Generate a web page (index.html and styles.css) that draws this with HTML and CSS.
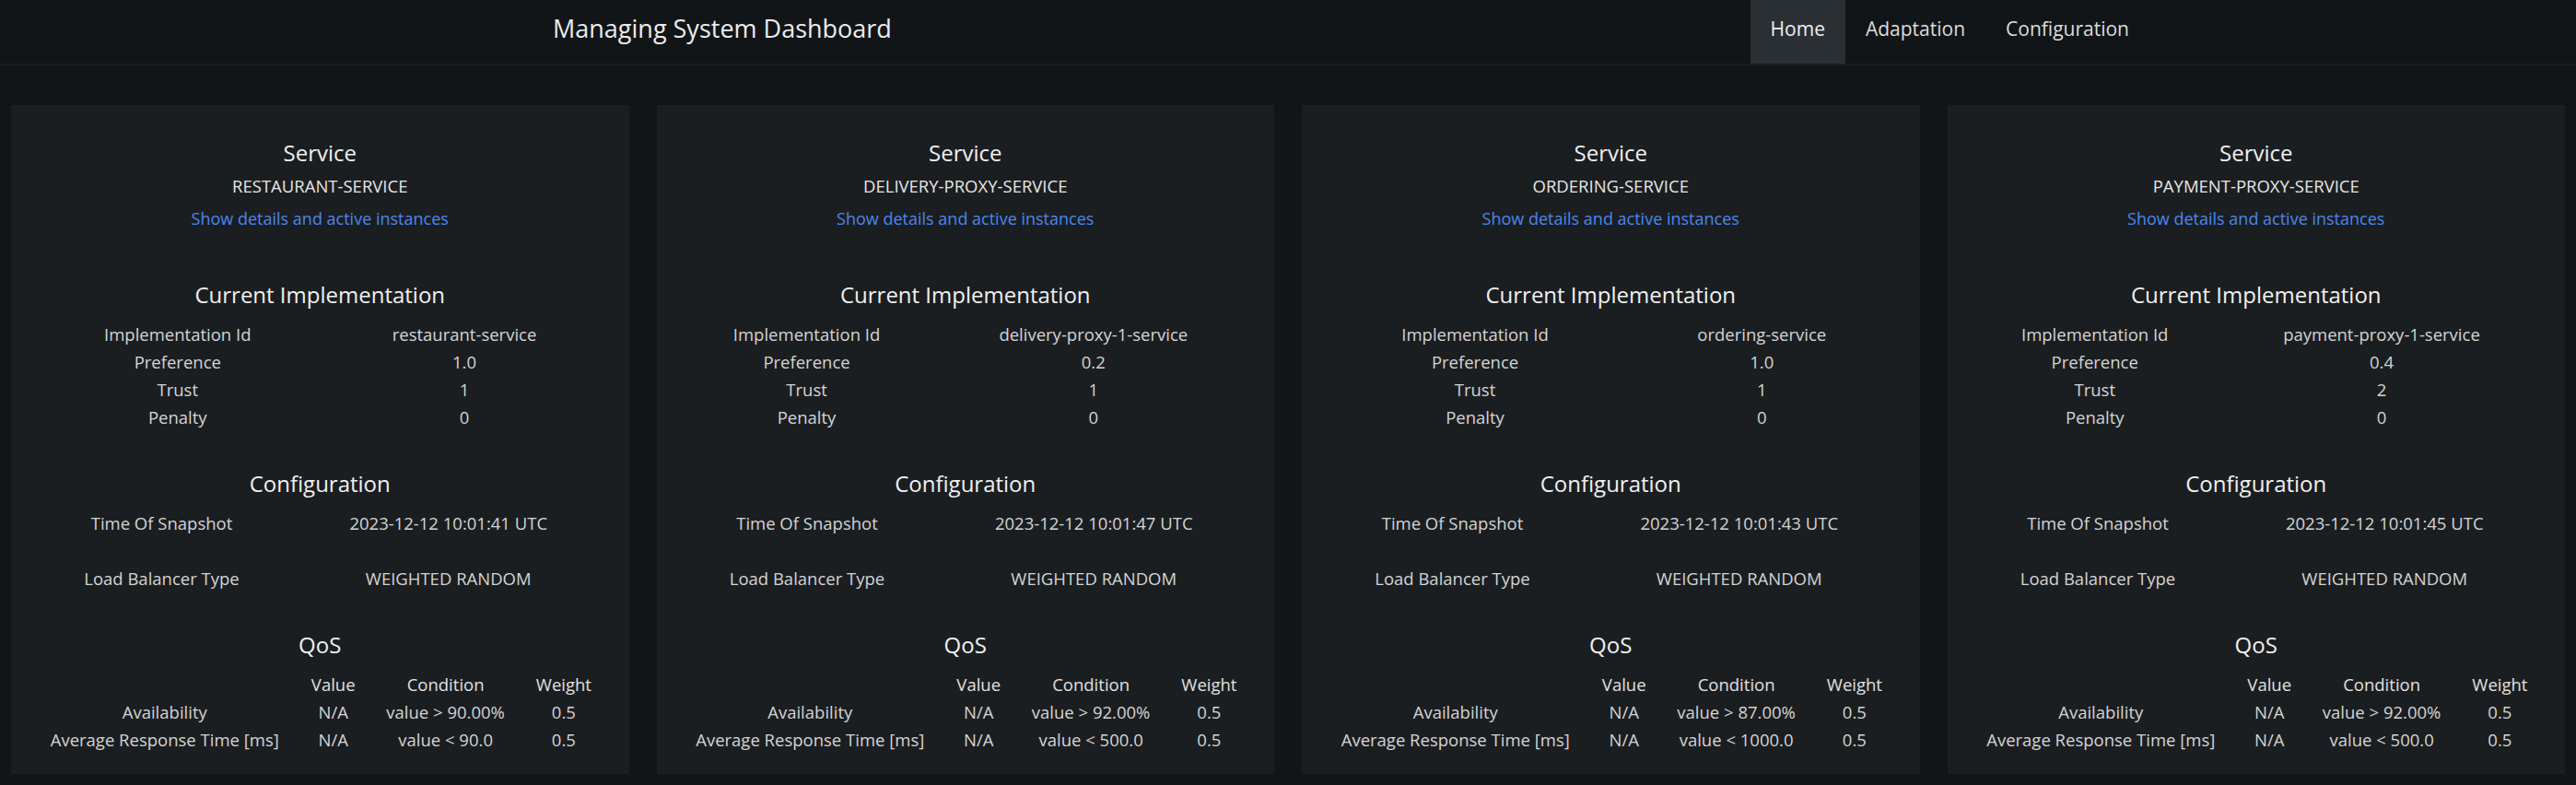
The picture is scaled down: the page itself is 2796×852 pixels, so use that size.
FILE: index.html
```html
<!DOCTYPE html>
<html lang="en">
<head>
<meta charset="utf-8">
<title>Managing System Dashboard</title>
<link rel="stylesheet" href="styles.css">
</head>
<body>
<header class="navbar">
  <div class="brand">Managing System Dashboard</div>
  <nav class="nav">
    <a class="nav-link active" href="#">Home</a>
    <a class="nav-link" href="#">Adaptation</a>
    <a class="nav-link" href="#">Configuration</a>
  </nav>
</header>
<main class="cards">
  <section class="card">
    <h2>Service</h2>
    <p class="service-name">RESTAURANT-SERVICE</p>
    <a class="details-link" href="#">Show details and active instances</a>
    <div class="section first">
      <h2>Current Implementation</h2>
      <table>
        <tr><td>Implementation Id</td><td>restaurant-service</td></tr>
        <tr><td>Preference</td><td>1.0</td></tr>
        <tr><td>Trust</td><td>1</td></tr>
        <tr><td>Penalty</td><td>0</td></tr>
      </table>
    </div>
    <div class="section">
      <h2>Configuration</h2>
      <table>
        <tr><td>Time Of Snapshot</td><td>2023-12-12 10:01:41 UTC</td></tr>
        <tr class="spacer"><td></td><td></td></tr>
        <tr><td>Load Balancer Type</td><td>WEIGHTED RANDOM</td></tr>
      </table>
    </div>
    <div class="section">
      <h2>QoS</h2>
      <table>
        <tr><th></th><th>Value</th><th>Condition</th><th>Weight</th></tr>
        <tr><td>Availability</td><td>N/A</td><td>value &gt; 90.00%</td><td>0.5</td></tr>
        <tr><td>Average Response Time [ms]</td><td>N/A</td><td>value &lt; 90.0</td><td>0.5</td></tr>
      </table>
    </div>
  </section>

  <section class="card">
    <h2>Service</h2>
    <p class="service-name">DELIVERY-PROXY-SERVICE</p>
    <a class="details-link" href="#">Show details and active instances</a>
    <div class="section first">
      <h2>Current Implementation</h2>
      <table>
        <tr><td>Implementation Id</td><td>delivery-proxy-1-service</td></tr>
        <tr><td>Preference</td><td>0.2</td></tr>
        <tr><td>Trust</td><td>1</td></tr>
        <tr><td>Penalty</td><td>0</td></tr>
      </table>
    </div>
    <div class="section">
      <h2>Configuration</h2>
      <table>
        <tr><td>Time Of Snapshot</td><td>2023-12-12 10:01:47 UTC</td></tr>
        <tr class="spacer"><td></td><td></td></tr>
        <tr><td>Load Balancer Type</td><td>WEIGHTED RANDOM</td></tr>
      </table>
    </div>
    <div class="section">
      <h2>QoS</h2>
      <table>
        <tr><th></th><th>Value</th><th>Condition</th><th>Weight</th></tr>
        <tr><td>Availability</td><td>N/A</td><td>value &gt; 92.00%</td><td>0.5</td></tr>
        <tr><td>Average Response Time [ms]</td><td>N/A</td><td>value &lt; 500.0</td><td>0.5</td></tr>
      </table>
    </div>
  </section>

  <section class="card">
    <h2>Service</h2>
    <p class="service-name">ORDERING-SERVICE</p>
    <a class="details-link" href="#">Show details and active instances</a>
    <div class="section first">
      <h2>Current Implementation</h2>
      <table>
        <tr><td>Implementation Id</td><td>ordering-service</td></tr>
        <tr><td>Preference</td><td>1.0</td></tr>
        <tr><td>Trust</td><td>1</td></tr>
        <tr><td>Penalty</td><td>0</td></tr>
      </table>
    </div>
    <div class="section">
      <h2>Configuration</h2>
      <table>
        <tr><td>Time Of Snapshot</td><td>2023-12-12 10:01:43 UTC</td></tr>
        <tr class="spacer"><td></td><td></td></tr>
        <tr><td>Load Balancer Type</td><td>WEIGHTED RANDOM</td></tr>
      </table>
    </div>
    <div class="section">
      <h2>QoS</h2>
      <table>
        <tr><th></th><th>Value</th><th>Condition</th><th>Weight</th></tr>
        <tr><td>Availability</td><td>N/A</td><td>value &gt; 87.00%</td><td>0.5</td></tr>
        <tr><td>Average Response Time [ms]</td><td>N/A</td><td>value &lt; 1000.0</td><td>0.5</td></tr>
      </table>
    </div>
  </section>

  <section class="card">
    <h2>Service</h2>
    <p class="service-name">PAYMENT-PROXY-SERVICE</p>
    <a class="details-link" href="#">Show details and active instances</a>
    <div class="section first">
      <h2>Current Implementation</h2>
      <table>
        <tr><td>Implementation Id</td><td>payment-proxy-1-service</td></tr>
        <tr><td>Preference</td><td>0.4</td></tr>
        <tr><td>Trust</td><td>2</td></tr>
        <tr><td>Penalty</td><td>0</td></tr>
      </table>
    </div>
    <div class="section">
      <h2>Configuration</h2>
      <table>
        <tr><td>Time Of Snapshot</td><td>2023-12-12 10:01:45 UTC</td></tr>
        <tr class="spacer"><td></td><td></td></tr>
        <tr><td>Load Balancer Type</td><td>WEIGHTED RANDOM</td></tr>
      </table>
    </div>
    <div class="section">
      <h2>QoS</h2>
      <table>
        <tr><th></th><th>Value</th><th>Condition</th><th>Weight</th></tr>
        <tr><td>Availability</td><td>N/A</td><td>value &gt; 92.00%</td><td>0.5</td></tr>
        <tr><td>Average Response Time [ms]</td><td>N/A</td><td>value &lt; 500.0</td><td>0.5</td></tr>
      </table>
    </div>
  </section>
</main>
</body>
</html>
```

FILE: styles.css
```css
* { box-sizing: border-box; }

body {
  margin: 0;
  background: #121518;
  color: #d8d8d8;
  font-family: "Open Sans", "Noto Sans", sans-serif;
}

.navbar {
  display: flex;
  align-items: flex-start;
  height: 71px;
  border-bottom: 2px solid #1b1e21;
  padding: 0 463px 0 600px;
}

.brand {
  font-size: 27px;
  line-height: 36px;
  padding-top: 13.2px;
  color: #ececec;
}

.nav {
  margin-left: auto;
  display: flex;
}

.nav-link {
  display: block;
  font-size: 21px;
  line-height: 31px;
  height: 69px;
  padding: 15.6px 22px 0;
  color: #dcdcdc;
  text-decoration: none;
}

.nav-link.active {
  background: #2a2f33;
  color: #f0f0f0;
}

.cards {
  display: grid;
  grid-template-columns: repeat(4, 1fr);
  gap: 30px;
  padding: 0 12px;
  margin-top: 43px;
}

.card {
  background: #1b1e21;
  padding: 37px 24px 22px;
  text-align: center;
}

.card h2 {
  margin: 0;
  font-size: 24px;
  font-weight: 500;
  line-height: 29px;
  color: #f0f0f0;
}

.service-name {
  margin: 8.4px 0 0;
  font-size: 18.5px;
  line-height: 27px;
  color: #e6e6e6;
}

.details-link {
  display: block;
  margin-top: 8.9px;
  font-size: 18px;
  line-height: 27px;
  color: #4a86f0;
  text-decoration: none;
}

.section {
  margin-top: 42.5px;
}

.section.first {
  margin-top: 54px;
}

.section table {
  width: 100%;
  margin-top: 13.5px;
  border-collapse: collapse;
}

.section td,
.section th {
  padding: 0 15.5px;
  font-size: 18.5px;
  line-height: 30px;
  height: 30px;
  font-weight: 400;
  text-align: center;
  white-space: nowrap;
  color: #d4d4d4;
}

.section th {
  font-weight: 500;
  color: #e0e0e0;
}
```
